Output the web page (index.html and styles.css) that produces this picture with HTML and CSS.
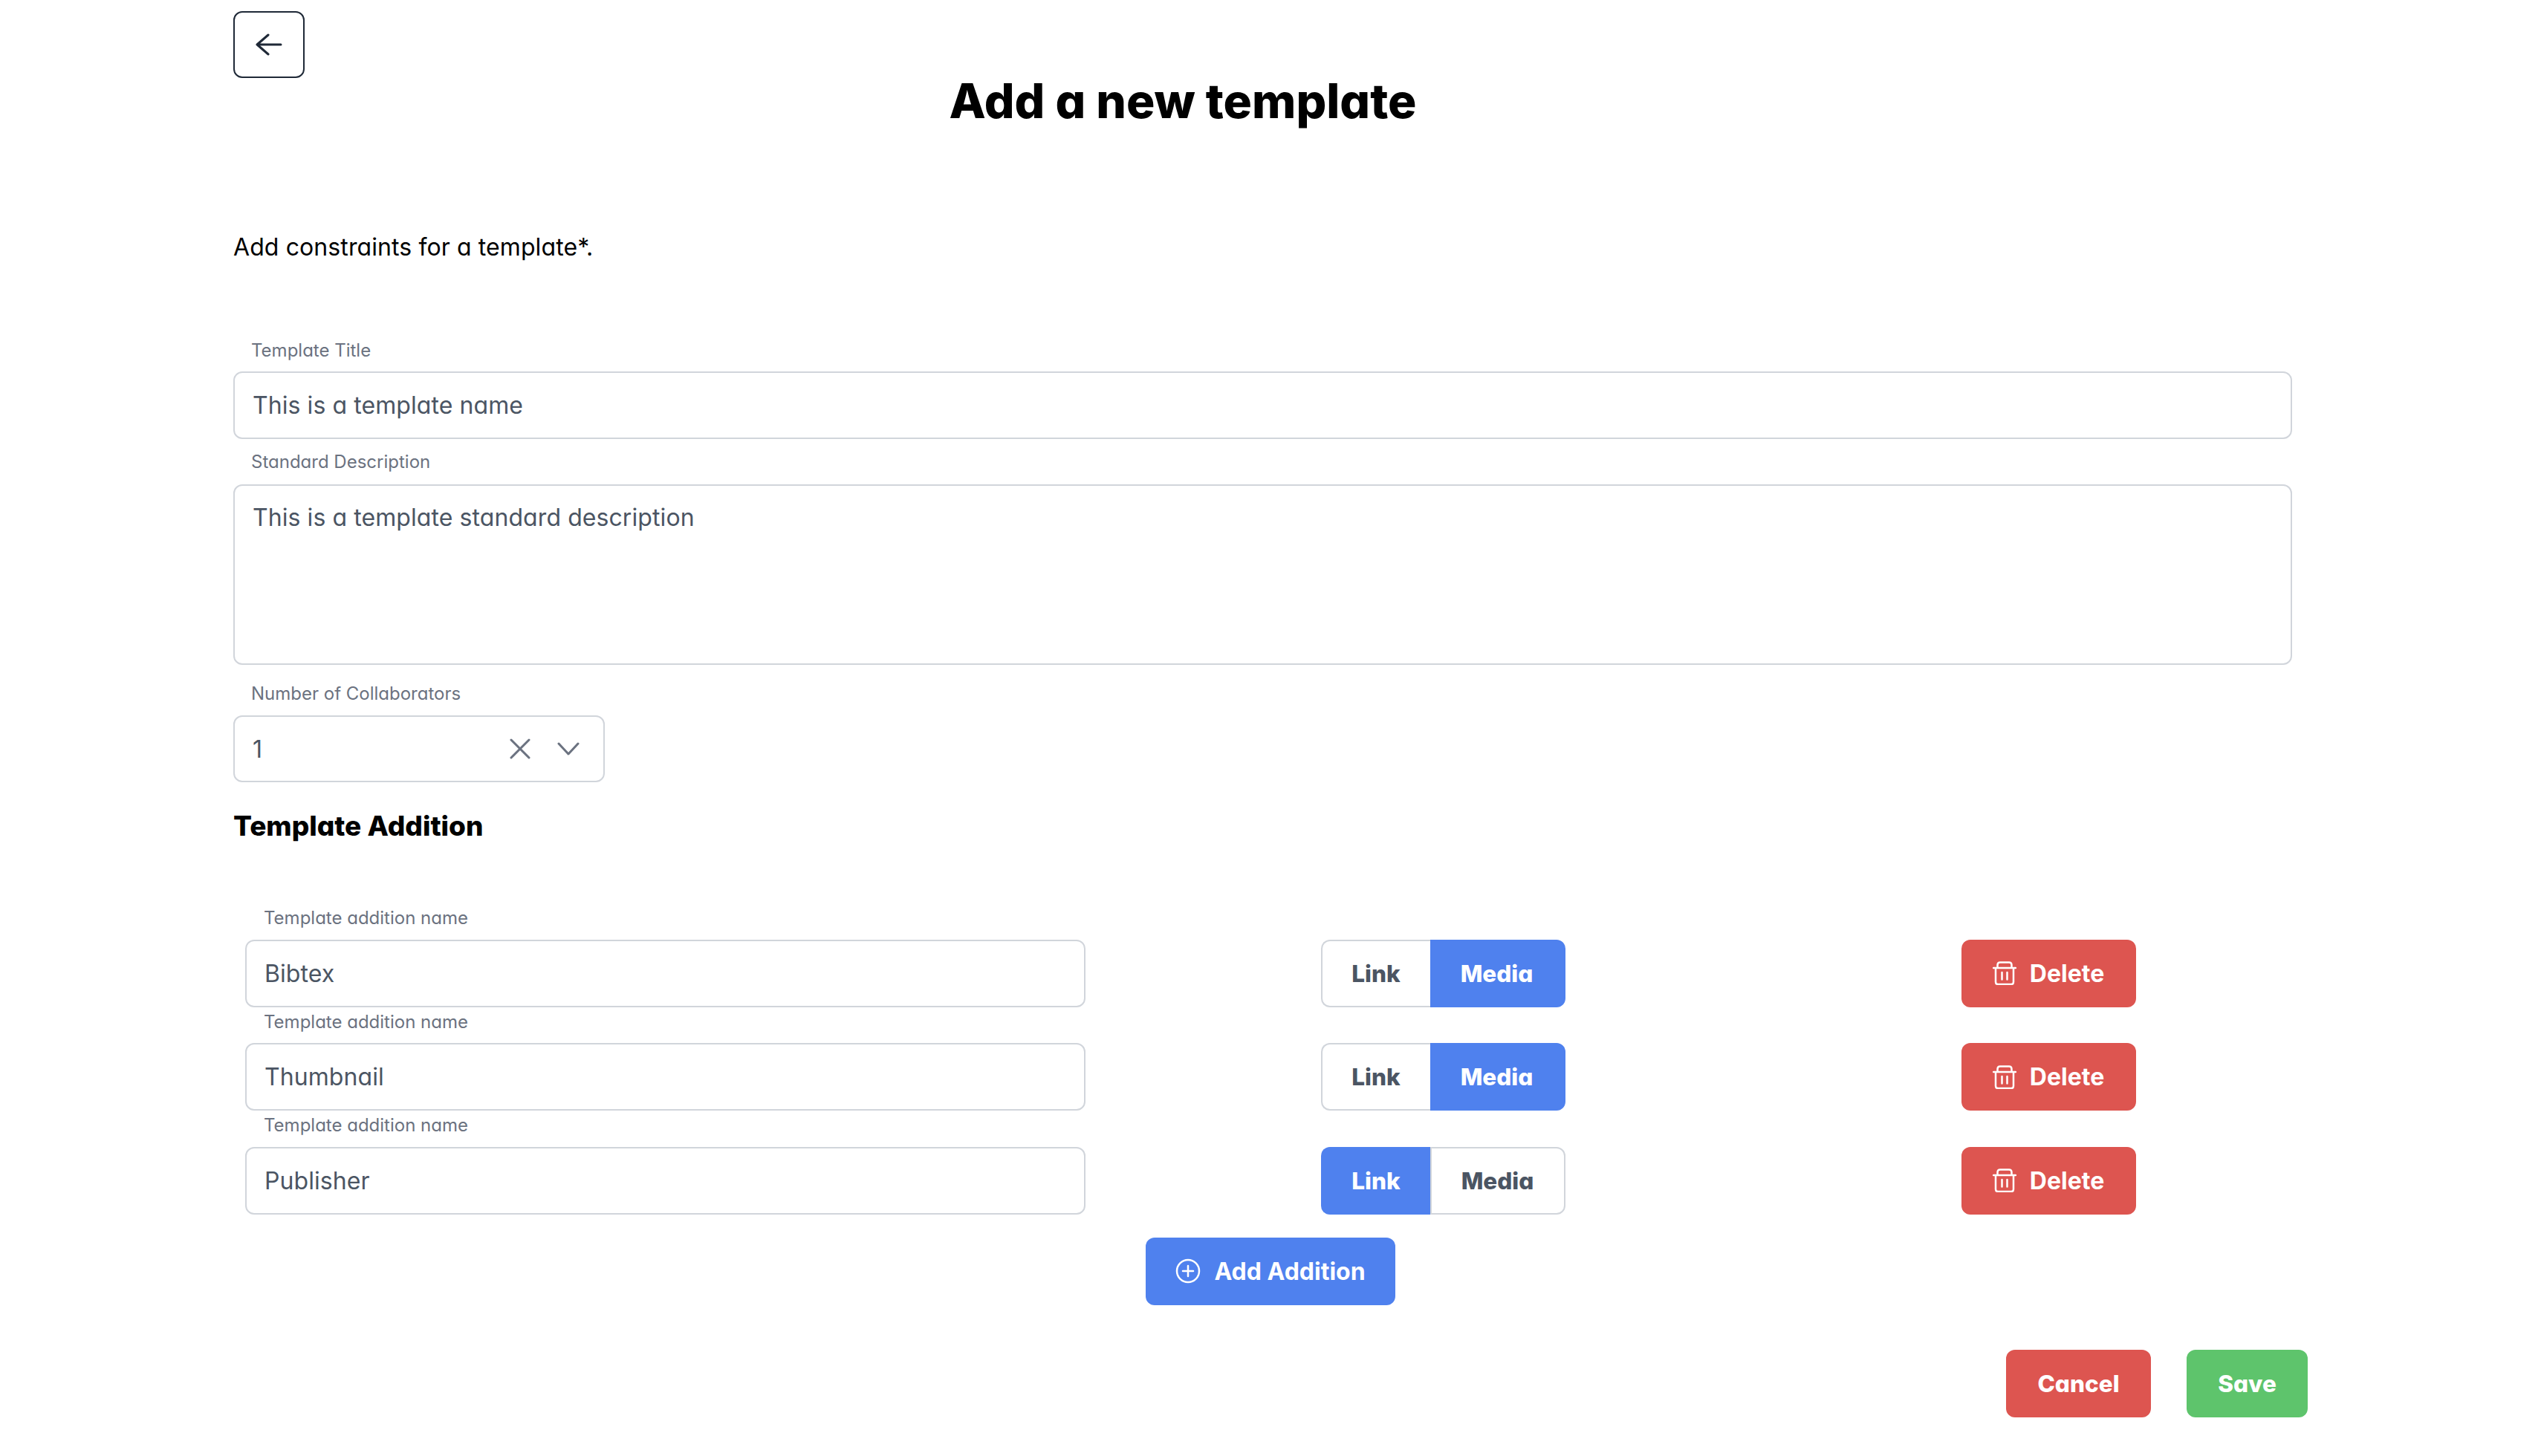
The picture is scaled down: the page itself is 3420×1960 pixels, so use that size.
FILE: index.html
```html
<!DOCTYPE html>
<html>
<head>
  <title>Add a new template</title>
  <link rel="stylesheet" href="styles.css">
</head>
<body>
<div class="page">
  <button class="backBtn" type="button">
    <svg width="36" height="30" viewBox="0 0 36 30" fill="none" stroke="#1f2937" stroke-width="3" stroke-linecap="round" stroke-linejoin="round"><path d="M34 15H2M17 2L2 15L17 28"/></svg>
  </button>
  <h1 class="pageTitle">Add a new template</h1>
  <p class="intro">Add constraints for a template*.</p>

  <label class="fieldLabel first">Template Title</label>
  <input class="textInput" type="text" value="This is a template name">
  <label class="fieldLabel">Standard Description</label>
  <textarea class="textInput descInput">This is a template standard description</textarea>
  <label class="fieldLabel collabLabel">Number of Collaborators</label>
  <div class="selectBox">
    <span class="selectValue">1</span>
    <svg width="28" height="28" viewBox="0 0 28 28" fill="none" stroke="#6b7280" stroke-width="3" stroke-linecap="round"><path d="M2 2L26 26M26 2L2 26"/></svg>
    <svg class="chevron" width="30" height="18" viewBox="0 0 30 18" fill="none" stroke="#6b7280" stroke-width="3" stroke-linecap="round" stroke-linejoin="round"><path d="M2 2L15 16L28 2"/></svg>
  </div>

  <h2 class="sectionTitle">Template Addition</h2>

  <div class="additions">
    <div class="additionRow">
      <div class="nameField">
        <label class="rowLabel">Template addition name</label>
        <input class="textInput" type="text" value="Bibtex">
      </div>
      <div class="toggle">
        <button class="toggleBtn" type="button">Link</button>
        <button class="toggleBtn media active" type="button">Media</button>
      </div>
      <button class="btn red deleteBtn" type="button">
        <svg width="32" height="32" viewBox="0 0 32 32" fill="none" stroke="#fff" stroke-width="2.5" stroke-linecap="round" stroke-linejoin="round"><path d="M1 9H31M6.500 9V5Q6.500 1.500 10 1.500H22Q25.500 1.500 25.500 5V9M4 9V28Q4 31 7 31H25Q28 31 28 28V9M12.500 15V24.500M19.500 15V24.500"/></svg>
        Delete
      </button>
    </div>
    <div class="additionRow">
      <div class="nameField">
        <label class="rowLabel">Template addition name</label>
        <input class="textInput" type="text" value="Thumbnail">
      </div>
      <div class="toggle">
        <button class="toggleBtn" type="button">Link</button>
        <button class="toggleBtn media active" type="button">Media</button>
      </div>
      <button class="btn red deleteBtn" type="button">
        <svg width="32" height="32" viewBox="0 0 32 32" fill="none" stroke="#fff" stroke-width="2.5" stroke-linecap="round" stroke-linejoin="round"><path d="M1 9H31M6.500 9V5Q6.500 1.500 10 1.500H22Q25.500 1.500 25.500 5V9M4 9V28Q4 31 7 31H25Q28 31 28 28V9M12.500 15V24.500M19.500 15V24.500"/></svg>
        Delete
      </button>
    </div>
    <div class="additionRow">
      <div class="nameField">
        <label class="rowLabel">Template addition name</label>
        <input class="textInput" type="text" value="Publisher">
      </div>
      <div class="toggle">
        <button class="toggleBtn active" type="button">Link</button>
        <button class="toggleBtn media" type="button">Media</button>
      </div>
      <button class="btn red deleteBtn" type="button">
        <svg width="32" height="32" viewBox="0 0 32 32" fill="none" stroke="#fff" stroke-width="2.5" stroke-linecap="round" stroke-linejoin="round"><path d="M1 9H31M6.500 9V5Q6.500 1.500 10 1.500H22Q25.500 1.500 25.500 5V9M4 9V28Q4 31 7 31H25Q28 31 28 28V9M12.500 15V24.500M19.500 15V24.500"/></svg>
        Delete
      </button>
    </div>
  </div>

  <div class="addRow">
    <button class="btn blue addBtn" type="button">
      <svg width="34" height="34" viewBox="0 0 34 34" fill="none" stroke="#fff" stroke-width="2.500" stroke-linecap="round"><circle cx="17" cy="17" r="15"/><path d="M17 10V24M10 17H24"/></svg>
      Add Addition
    </button>
  </div>

  <div class="formActions">
    <button class="btn red cancelBtn" type="button">Cancel</button>
    <button class="btn green saveBtn" type="button">Save</button>
  </div>
</div>
</body>
</html>
```

FILE: styles.css
```css
* {
  box-sizing: border-box;
}

body {
  margin: 0;
  background-color: #fff;
  font-family: Inter, "Liberation Sans", sans-serif;
  font-feature-settings: "cv11" 1;
  color: #000;
}

button,
input,
textarea {
  font-family: inherit;
  font-feature-settings: inherit;
}

.page {
  padding: 15px 314px 0;
}

.backBtn {
  display: flex;
  align-items: center;
  justify-content: center;
  width: 96px;
  height: 90px;
  padding: 0;
  background-color: #fff;
  border: 2px solid #1f2937;
  border-radius: 12px;
}

.pageTitle {
  margin: 1px 0 0;
  padding-right: 236px;
  height: 85px;
  font-size: 64px;
  line-height: 60px;
  font-weight: 800;
  text-align: center;
}

.intro {
  margin: 0;
  padding-top: 118px;
  font-size: 32px;
  line-height: 48px;
  letter-spacing: 0.1px;
}

.fieldLabel {
  display: block;
  padding: 13px 24px 12px;
  font-size: 24px;
  line-height: 36px;
  color: #6b7280;
}

.fieldLabel.first {
  margin-top: 97px;
  padding-top: 0;
  padding-bottom: 10px;
}

.fieldLabel.collabLabel {
  padding-top: 21px;
  padding-bottom: 11px;
}

.textInput {
  display: block;
  width: 2771px;
  height: 91px;
  padding: 0 24px;
  background-color: #fff;
  border: 2px solid #d1d5db;
  border-radius: 12px;
  font-size: 32px;
  letter-spacing: 0.08px;
  color: #4b5563;
  outline: none;
}

.descInput {
  height: 243px;
  padding-top: 21px;
  line-height: 44px;
  resize: none;
}

.selectBox {
  display: flex;
  align-items: center;
  width: 500px;
  height: 90px;
  padding: 0 32px 0 24px;
  border: 2px solid #d1d5db;
  border-radius: 12px;
  font-size: 32px;
  color: #4b5563;
}

.selectValue {
  flex: 1;
}

.chevron {
  margin-left: 36px;
}

.sectionTitle {
  margin: 35px 0 0;
  height: 128px;
  font-size: 37px;
  line-height: 48px;
  font-weight: 800;
}

.additionRow {
  display: grid;
  grid-template-columns: 1131px 962px 668px;
  align-items: end;
  justify-items: center;
  padding-left: 16px;
}

.nameField {
  width: 100%;
}

.nameField .textInput {
  width: 100%;
}

.rowLabel {
  display: block;
  height: 48.5px;
  padding: 2px 25px 0;
  font-size: 24px;
  line-height: 36px;
  color: #6b7280;
}

.toggle {
  display: flex;
  width: 329px;
  height: 91px;
}

.toggleBtn {
  width: 147px;
  padding: 0;
  background-color: #fff;
  border: 2px solid #d1d5db;
  border-right: 0;
  border-radius: 12px 0 0 12px;
  font-size: 31.500px;
  font-weight: 800;
  color: #4b5563;
}

.toggleBtn.media {
  width: 182px;
  border-right: 2px solid #d1d5db;
  border-left: 2px solid #d1d5db;
  border-radius: 0 12px 12px 0;
}

.toggleBtn.active {
  background-color: #4f81ee;
  border-color: #4f81ee;
  color: #fff;
}

.toggleBtn.media.active {
  border-left: 0;
}

.btn {
  display: flex;
  align-items: center;
  justify-content: center;
  height: 91px;
  padding: 0;
  border: 0;
  border-radius: 12px;
  font-size: 32px;
  font-weight: 700;
  color: #fff;
}

.btn.red {
  background-color: #dd5550;
}

.btn.blue {
  background-color: #4f81ee;
}

.btn.green {
  background-color: #5ec46c;
}

.deleteBtn {
  gap: 18px;
  width: 235px;
}

.addRow {
  display: flex;
  justify-content: center;
  margin-top: 31px;
}

.addBtn {
  gap: 18px;
  width: 336px;
}

.formActions {
  display: flex;
  justify-content: flex-end;
  gap: 48px;
  margin-top: 60px;
}

.cancelBtn,
.saveBtn {
  font-size: 31.500px;
  font-weight: 800;
}

.cancelBtn {
  width: 195px;
}

.saveBtn {
  width: 163px;
}
```
